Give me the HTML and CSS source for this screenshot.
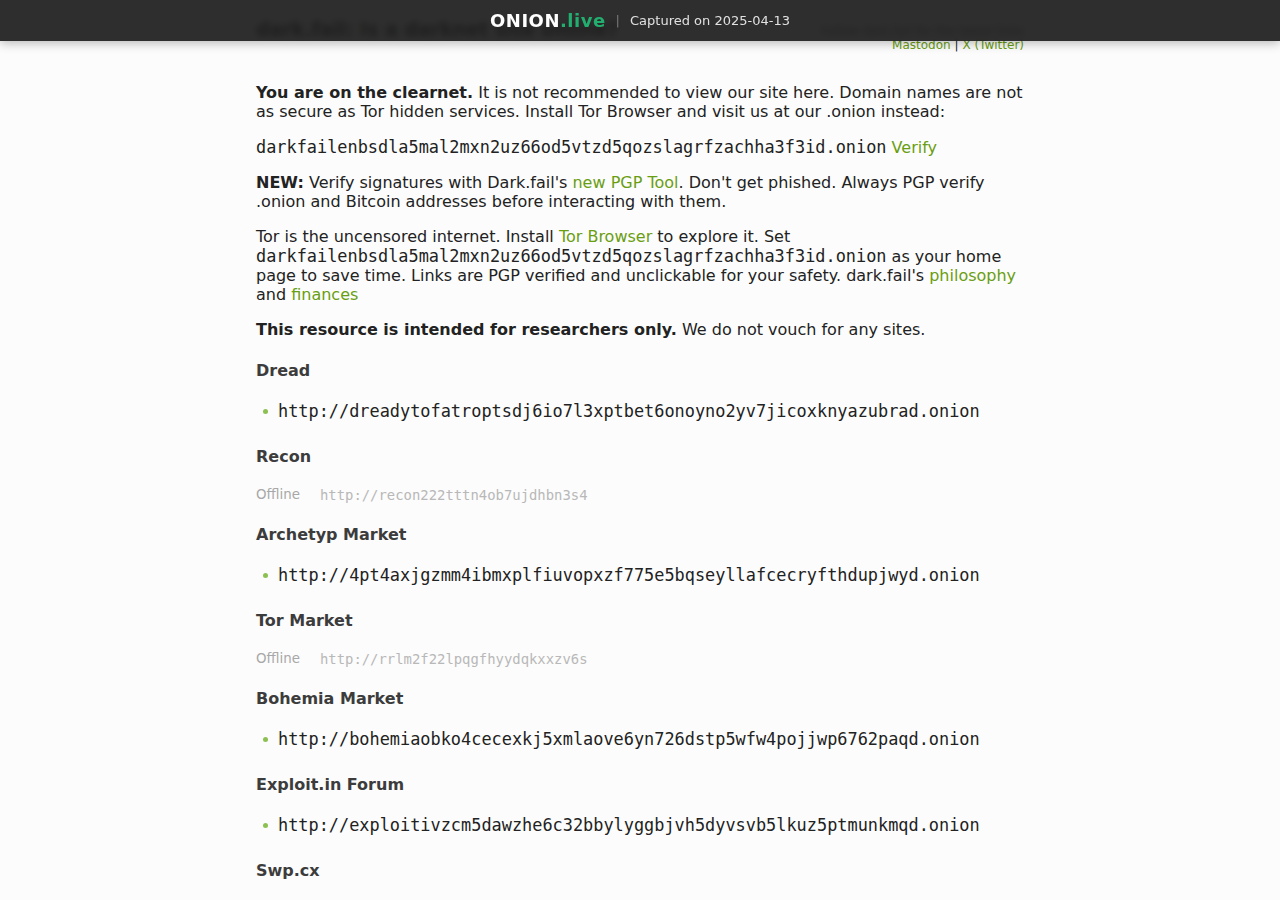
FILE: index.html
```html
<!DOCTYPE html>
<html lang="en">
<head>
<meta charset="utf-8">
<title>dark.fail: Is a darknet site online? | ONION.live</title>
<link rel="stylesheet" href="styles.css">
</head>
<body>
<div class="capture-bar">
  <span class="brand">ONION<span class="brand-tld">.live</span></span>
  <span class="sep">|</span>
  <span class="captured">Captured on 2025-04-13</span>
</div>

<main class="page">
  <header class="site-header">
    <h1 class="site-title">dark.fail: Is a darknet site online?</h1>
    <div class="social">
      <div class="social-note">Follow dark.fail for the latest links</div>
      <div class="social-links"><a href="#">Mastodon</a> <span class="bar">|</span> <a href="#">X (Twitter)</a></div>
    </div>
  </header>

  <section class="intro">
    <p><strong>You are on the clearnet.</strong> It is not recommended to view our site here. Domain names are not as secure as Tor hidden services. Install Tor Browser and visit us at our .onion instead:</p>
    <p><code class="onion-main">darkfailenbsdla5mal2mxn2uz66od5vtzd5qozslagrfzachha3f3id.onion</code> <a href="#">Verify</a></p>
    <p><strong>NEW:</strong> Verify signatures with Dark.fail's <a href="#">new PGP Tool</a>. Don't get phished. Always PGP verify .onion and Bitcoin addresses before interacting with them.</p>
    <p>Tor is the uncensored internet. Install <a href="#">Tor Browser</a> to explore it. Set <code class="onion-inline">darkfailenbsdla5mal2mxn2uz66od5vtzd5qozslagrfzachha3f3id.onion</code> as your home page to save time. Links are PGP verified and unclickable for your safety. dark.fail's <a href="#">philosophy</a> and <a href="#">finances</a></p>
    <p class="last"><strong>This resource is intended for researchers only.</strong> We do not vouch for any sites.</p>
  </section>

  <section class="site">
    <h3>Dread</h3>
    <ul class="links"><li><code>http://dreadytofatroptsdj6io7l3xptbet6onoyno2yv7jicoxknyazubrad.onion</code></li></ul>
  </section>

  <section class="site">
    <h3>Recon</h3>
    <div class="offline"><span class="status">Offline</span><code>http://recon222tttn4ob7ujdhbn3s4</code></div>
  </section>

  <section class="site">
    <h3>Archetyp Market</h3>
    <ul class="links"><li><code>http://4pt4axjgzmm4ibmxplfiuvopxzf775e5bqseyllafcecryfthdupjwyd.onion</code></li></ul>
  </section>

  <section class="site">
    <h3>Tor Market</h3>
    <div class="offline"><span class="status">Offline</span><code>http://rrlm2f22lpqgfhyydqkxxzv6s</code></div>
  </section>

  <section class="site">
    <h3>Bohemia Market</h3>
    <ul class="links"><li><code>http://bohemiaobko4cecexkj5xmlaove6yn726dstp5wfw4pojjwp6762paqd.onion</code></li></ul>
  </section>

  <section class="site">
    <h3>Exploit.in Forum</h3>
    <ul class="links"><li><code>http://exploitivzcm5dawzhe6c32bbylyggbjvh5dyvsvb5lkuz5ptmunkmqd.onion</code></li></ul>
  </section>

  <section class="site">
    <h3>Swp.cx</h3>
    <ul class="links"><li><code>http://swpcxsitesfwjcnqjzqmkwvpwesxrmozvmvqzpjbmlrstv4bvzruzjyd.onion</code></li></ul>
  </section>
</main>
</body>
</html>
```

FILE: styles.css
```css
html, body {
  margin: 0;
  padding: 0;
}

body {
  background: #fcfcfc;
  color: #222;
  font-family: "DejaVu Sans", sans-serif;
  font-size: 16px;
}

a {
  color: #6a9e12;
  text-decoration: none;
}

/* ---------- capture bar (overlay) ---------- */
.capture-bar {
  position: fixed;
  top: 0;
  left: 0;
  right: 0;
  height: 41px;
  z-index: 10;
  display: flex;
  align-items: center;
  justify-content: center;
  gap: 10px;
  background: rgba(30, 30, 30, 0.93);
  backdrop-filter: blur(3px);
  box-shadow: 0 2px 10px rgba(0, 0, 0, 0.28);
  font-family: "DejaVu Sans", sans-serif;
}

.brand {
  color: #fff;
  font-weight: bold;
  font-size: 18px;
  letter-spacing: 0.5px;
}

.brand-tld {
  color: #22ae6f;
}

.sep {
  color: #777;
  font-size: 13px;
}

.captured {
  color: #e0e0e0;
  font-size: 13px;
}

/* ---------- page ---------- */
.page {
  width: 768px;
  margin: 0 auto;
  padding-bottom: 40px;
}

.site-header {
  display: flex;
  justify-content: space-between;
  align-items: flex-start;
  padding-top: 18px;
  margin-bottom: 31px;
}

.site-title {
  margin: 0;
  font-size: 19px;
  line-height: 22px;
  color: #222;
}

.social {
  margin-top: 6px;
  text-align: right;
  font-size: 12px;
  line-height: 14px;
  color: #555;
}

.social .bar {
  color: #222;
}

/* ---------- intro ---------- */
.intro p {
  margin: 0 0 16px;
  line-height: 19px;
}

.intro p.last {
  margin-bottom: 22px;
}

code {
  font-family: "DejaVu Sans Mono", monospace;
  font-size: 16.9px;
}

.intro code {
  line-height: 20px;
  display: inline-block;
}

/* ---------- sites ---------- */
.site h3 {
  margin: 0 0 20px;
  font-size: 16px;
  line-height: 20px;
  color: #3c3c3c;
}

.links {
  list-style: none;
  margin: 0 0 26px;
  padding: 0;
}

.links li {
  display: flex;
  align-items: center;
  gap: 10px;
  line-height: 20px;
  padding-left: 7px;
}

.links li::before {
  content: "";
  width: 5px;
  height: 5px;
  border-radius: 50%;
  background: #8cc152;
  flex: none;
}

.offline {
  display: flex;
  align-items: center;
  gap: 20px;
  line-height: 16px;
  margin-bottom: 22px;
}

.offline .status {
  color: #a8a8a8;
  font-size: 13.4px;
}

.offline code {
  color: #b8b8b8;
  font-size: 13.9px;
}
```
